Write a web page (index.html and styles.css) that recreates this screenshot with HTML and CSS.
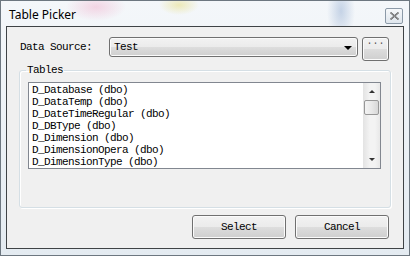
FILE: index.html
```html
<!DOCTYPE html>
<html lang="en">
<head>
    <meta charset="UTF-8">
    <title>Table Picker</title>
    <link rel="stylesheet" href="styles.css">
</head>
<body>
    <div class="window">
        <div class="titlebar">
            <span class="title">Table Picker</span>
            <span class="close-btn">
                <svg width="11" height="10" viewBox="0 0 11 10">
                    <path d="M1.5 1.5 L9.5 8.5 M9.5 1.5 L1.5 8.5" stroke="#3a3a3a" stroke-width="1.6" fill="none"/>
                    <path d="M1.5 1.5 L9.5 8.5 M9.5 1.5 L1.5 8.5" stroke="#f4f6f8" stroke-width="0.5" fill="none"/>
                </svg>
            </span>
        </div>

        <div class="client">
            <div class="source-row">
                <span class="source-label">Data Source:</span>
                <div class="combo">
                    <span>Test</span>
                    <span class="combo-arrow"></span>
                </div>
                <button class="more-btn">···</button>
            </div>

            <fieldset class="tables-group">
                <legend>Tables</legend>
                <div class="table-list">
                    <div class="table-items">
                        <div>D_Database (dbo)</div>
                        <div>D_DataTemp (dbo)</div>
                        <div>D_DateTimeRegular (dbo)</div>
                        <div>D_DBType (dbo)</div>
                        <div>D_Dimension (dbo)</div>
                        <div>D_DimensionOpera (dbo)</div>
                        <div>D_DimensionType (dbo)</div>
                    </div>
                    <div class="scrollbar">
                        <span class="arrow-up"></span>
                        <span class="thumb"></span>
                        <span class="track"></span>
                        <span class="arrow-down"></span>
                    </div>
                </div>
            </fieldset>

            <div class="actions">
                <button class="btn">Select</button>
                <button class="btn">Cancel</button>
            </div>
        </div>
    </div>
</body>
</html>
```

FILE: styles.css
```css
/* Page */
body {
    margin: 0;
    background: #ffffff;
}

/* Outer aero frame */
.window {
    width: 410px;
    height: 256px;
    box-sizing: border-box;
    border: 1px solid #6d7780;
    padding: 0 5px 6px 5px;
    display: flex;
    flex-direction: column;
    background:
        radial-gradient(ellipse 30px 14px at 95px 6px, rgba(240, 170, 200, 0.45), transparent),
        radial-gradient(ellipse 20px 10px at 178px 4px, rgba(230, 220, 120, 0.5), transparent),
        radial-gradient(ellipse 14px 30px at 340px 10px, rgba(150, 175, 210, 0.5), transparent),
        linear-gradient(#f4f7fa, #e4ebf1);
}

.titlebar {
    height: 25px;
    display: flex;
    align-items: center;
    justify-content: space-between;
    padding-left: 3px;
}

.title {
    font-family: "Noto Sans", sans-serif;
    font-size: 12px;
    color: #000;
    margin-top: 2px;
}

.close-btn {
    width: 16px;
    height: 14px;
    margin-top: 4px;
    margin-right: 1px;
    border: 1px solid #8c9aa8;
    border-radius: 2px;
    background: linear-gradient(#f6f8fa, #dfe6ed);
    display: flex;
    align-items: center;
    justify-content: center;
}

/* Client area */
.client {
    height: 223px;
    box-sizing: border-box;
    border: 1px solid #3f4346;
    background-color: #f0f0f0;
    padding: 10px 12px 0 12px;
    font-family: "Liberation Mono", "DejaVu Sans Mono", monospace;
    font-size: 11px;
    letter-spacing: -0.6px;
    color: #000;
}

.source-row {
    display: flex;
    align-items: flex-start;
}

.source-label {
    width: 89px;
    margin-left: 1px;
    padding-top: 4px;
}

.combo {
    width: 249px;
    height: 20px;
    box-sizing: border-box;
    border: 1px solid #707070;
    border-radius: 3px;
    background: linear-gradient(#f2f2f2 0%, #ebebeb 50%, #dddddd 51%, #cfcfcf 100%);
    box-shadow: inset 0 0 0 1px #fbfbfb;
    display: flex;
    align-items: center;
    justify-content: space-between;
    padding: 0 5px 0 4px;
}

.combo-arrow {
    width: 0;
    height: 0;
    border-left: 4px solid transparent;
    border-right: 4px solid transparent;
    border-top: 4px solid #000;
    margin-top: 1px;
}

button {
    font-family: "Liberation Mono", "DejaVu Sans Mono", monospace;
    font-size: 11px;
    letter-spacing: -0.6px;
    color: #000;
    border: 1px solid #707070;
    border-radius: 3px;
    background: linear-gradient(#f2f2f2 0%, #ebebeb 50%, #dddddd 51%, #cfcfcf 100%);
    box-shadow: inset 0 0 0 1px #fbfbfb;
    padding: 0;
}

.more-btn {
    width: 27px;
    height: 24px;
    margin-left: 4px;
    font-size: 10px;
    letter-spacing: 0;
    color: #555;
    line-height: 10px;
    padding-bottom: 10px;
}

/* Tables group */
.tables-group {
    margin: 3px 0 0 0;
    padding: 6px 9px 0 8px;
    height: 144px;
    box-sizing: border-box;
    border: 1px solid #d5dfe5;
    border-radius: 3px;
    box-shadow: inset 1px 1px 0 #ffffff, 1px 1px 0 #ffffff;
}

.tables-group legend {
    padding: 0 1px;
    margin-left: -2px;
}

.table-list {
    height: 87px;
    box-sizing: border-box;
    border: 1px solid #828790;
    background: #ffffff;
    display: flex;
}

.table-items {
    flex: 1;
    padding: 1px 0 0 3px;
    line-height: 12px;
    overflow: hidden;
}

/* Scrollbar */
.scrollbar {
    width: 17px;
    display: flex;
    flex-direction: column;
    align-items: center;
    background: linear-gradient(90deg, #e3e3e3, #f3f3f3 40%, #f3f3f3 70%, #e8e8e8);
}

.arrow-up, .arrow-down {
    height: 17px;
    display: flex;
    align-items: center;
    justify-content: center;
}

.arrow-up::after, .arrow-down::after {
    content: "";
    border-left: 3px solid transparent;
    border-right: 3px solid transparent;
}

.arrow-up::after {
    border-bottom: 3px solid #333;
}

.arrow-down::after {
    border-top: 3px solid #333;
}

.thumb {
    width: 15px;
    height: 15px;
    box-sizing: border-box;
    border: 1px solid #979797;
    border-radius: 2px;
    background: linear-gradient(90deg, #f3f3f3, #e8e8e8 50%, #d7d7d7);
}

.track {
    flex: 1;
}

/* Bottom buttons */
.actions {
    display: flex;
    justify-content: flex-end;
    gap: 9px;
    margin-top: 7px;
    padding-right: 2px;
}

.btn {
    width: 94px;
    height: 24px;
}
```
